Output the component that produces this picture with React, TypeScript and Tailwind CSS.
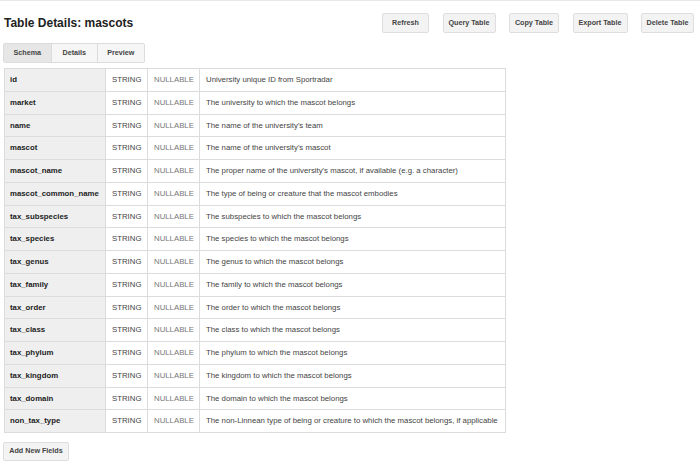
import React from 'react';

interface Field {
  name: string;
  description: string;
}

const fields: Field[] = [
  { name: 'id', description: 'University unique ID from Sportradar' },
  { name: 'market', description: 'The university to which the mascot belongs' },
  { name: 'name', description: "The name of the university's team" },
  { name: 'mascot', description: "The name of the university's mascot" },
  { name: 'mascot_name', description: "The proper name of the university's mascot, if available (e.g. a character)" },
  { name: 'mascot_common_name', description: 'The type of being or creature that the mascot embodies' },
  { name: 'tax_subspecies', description: 'The subspecies to which the mascot belongs' },
  { name: 'tax_species', description: 'The species to which the mascot belongs' },
  { name: 'tax_genus', description: 'The genus to which the mascot belongs' },
  { name: 'tax_family', description: 'The family to which the mascot belongs' },
  { name: 'tax_order', description: 'The order to which the mascot belongs' },
  { name: 'tax_class', description: 'The class to which the mascot belongs' },
  { name: 'tax_phylum', description: 'The phylum to which the mascot belongs' },
  { name: 'tax_kingdom', description: 'The kingdom to which the mascot belongs' },
  { name: 'tax_domain', description: 'The domain to which the mascot belongs' },
  { name: 'non_tax_type', description: 'The non-Linnean type of being or creature to which the mascot belongs, if applicable' },
];

const actions = [
  { label: 'Refresh', w: 'w-[47px]' },
  { label: 'Query Table', w: 'w-[53px]' },
  { label: 'Copy Table', w: 'w-[50px]' },
  { label: 'Export Table', w: 'w-[55px]' },
  { label: 'Delete Table', w: 'w-[53px]' },
];

const tabs = ['Schema', 'Details', 'Preview'];

export default function App() {
  return (
    <div
      className="w-[700px] h-[474px] bg-white border-t border-[#e8e8e8] overflow-hidden text-[#333]"
      style={{ fontFamily: '"Liberation Sans", Arial, sans-serif' }}
    >
      <div className="flex items-center justify-between pl-[4px] pr-[6px] mt-[12px]">
        <h1 className="text-[12px] font-bold text-[#222] leading-none">Table Details: mascots</h1>
        <div className="flex gap-[13.5px]">
          {actions.map((a) => (
            <button
              key={a.label}
              className={`${a.w} h-[20px] flex items-center justify-center bg-[#f3f3f3] border border-[#dedede] rounded-[2px] text-[7.2px] font-bold text-[#444] whitespace-nowrap`}
            >
              {a.label}
            </button>
          ))}
        </div>
      </div>

      <div className="flex ml-[3px] mt-[10px] w-fit border border-[#dcdcdc] rounded-[2px]">
        {tabs.map((t, i) => (
          <div
            key={t}
            className={`h-[18px] w-[46.5px] flex items-center justify-center text-[7.2px] font-bold text-[#444] ${
              i === 0 ? 'bg-[#e6e6e6]' : 'bg-[#f6f6f6] border-l border-[#dcdcdc]'
            }`}
          >
            {t}
          </div>
        ))}
      </div>

      <table className="ml-[4px] mt-[5px] border-collapse w-[502px] text-[7.8px] table-fixed">
        <colgroup>
          <col className="w-[101px]" />
          <col className="w-[42px]" />
          <col className="w-[52px]" />
          <col />
        </colgroup>
        <tbody>
          {fields.map((f) => (
            <tr key={f.name} className="h-[22.75px]">
              <td className="border border-[#dcdcdc] bg-[#efefef] pl-[5px] font-bold text-[#222]">{f.name}</td>
              <td className="border border-[#dcdcdc] pl-[6px] text-[#444]">STRING</td>
              <td className="border border-[#dcdcdc] pl-[6px] text-[#777]">NULLABLE</td>
              <td className="border border-[#dcdcdc] pl-[6px] text-[#444] whitespace-nowrap">{f.description}</td>
            </tr>
          ))}
        </tbody>
      </table>

      <button className="ml-[3px] mt-[9px] w-[66px] h-[19px] flex items-center justify-center bg-[#f3f3f3] border border-[#dedede] rounded-[2px] text-[7.2px] font-bold text-[#444] whitespace-nowrap">
        Add New Fields
      </button>
    </div>
  );
}
